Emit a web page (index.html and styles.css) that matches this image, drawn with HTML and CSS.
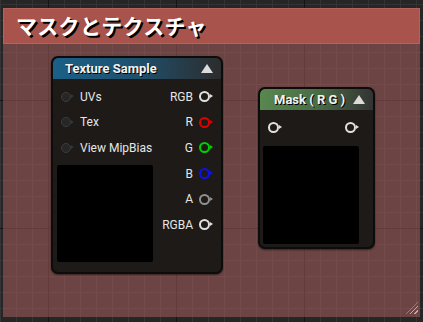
FILE: index.html
```html
<!DOCTYPE html>
<html lang="en">
<head>
    <meta charset="UTF-8">
    <title>Material Graph</title>
    <link rel="stylesheet" href="styles.css">
</head>
<body>
    <div class="graph">
        <!-- Comment box -->
        <div class="comment">
            <div class="comment-header">マスクとテクスチャ</div>
            <div class="comment-body"></div>
            <span class="grip"></span>
        </div>

        <!-- Texture Sample node -->
        <div class="node node-texture">
            <div class="node-header header-blue">
                <span class="node-title">Texture Sample</span>
                <span class="collapse"></span>
            </div>
            <div class="node-body">
                <div class="pins">
                    <div class="inputs">
                        <div class="pin in"><span class="dot"></span>UVs</div>
                        <div class="pin in"><span class="dot"></span>Tex</div>
                        <div class="pin in"><span class="dot"></span>View MipBias</div>
                        <div class="preview"></div>
                    </div>
                    <div class="outputs">
                        <div class="pin out">RGB<span class="ring white"></span></div>
                        <div class="pin out">R<span class="ring red"></span></div>
                        <div class="pin out">G<span class="ring green"></span></div>
                        <div class="pin out">B<span class="ring blue"></span></div>
                        <div class="pin out">A<span class="ring grey"></span></div>
                        <div class="pin out">RGBA<span class="ring white"></span></div>
                    </div>
                </div>
            </div>
        </div>

        <!-- Mask node -->
        <div class="node node-mask">
            <div class="node-header header-green">
                <span class="node-title">Mask ( R G )</span>
                <span class="collapse"></span>
            </div>
            <div class="node-body">
                <div class="mask-pins">
                    <span class="ring white"></span>
                    <span class="ring white"></span>
                </div>
                <div class="preview mask-preview"></div>
            </div>
        </div>
    </div>
</body>
</html>
```

FILE: styles.css
```css
body {
    margin: 0;
    width: 423px;
    height: 322px;
    overflow: hidden;
    font-family: Roboto, "Noto Sans", sans-serif;
    background-color: #262626;
    background-image:
        linear-gradient(90deg, #151515 1px, transparent 1px),
        linear-gradient(#151515 1px, transparent 1px),
        linear-gradient(90deg, #343434 1px, transparent 1px),
        linear-gradient(#343434 1px, transparent 1px);
    background-size: 128px 128px, 128px 128px, 16px 16px, 16px 16px;
    background-position: 48px 100px, 48px 100px, 0 4px, 0 4px;
}

.graph {
    position: relative;
    width: 423px;
    height: 322px;
}

/* comment */
.comment {
    position: absolute;
    left: 3px;
    top: 8px;
    width: 417px;
    height: 309px;
    display: flex;
    flex-direction: column;
}

.comment-header {
    height: 36px;
    box-sizing: border-box;
    background-color: #a8534c;
    border: 1px solid #b8605a;
    color: #fff;
    font-family: "Noto Sans CJK JP", sans-serif;
    font-weight: bold;
    font-size: 21px;
    line-height: 32px;
    padding-left: 12px;
    letter-spacing: 0.3px;
    text-shadow: 2px 2px 0 #000;
}

.comment-body {
    flex: 1;
    background-color: rgba(178, 98, 96, 0.5);
}

.grip {
    position: absolute;
    right: 2px;
    bottom: 3px;
    width: 12px;
    height: 12px;
    background-image: repeating-linear-gradient(135deg, transparent 0, transparent 2px, #c9a7a5 2px, #c9a7a5 3px);
    clip-path: polygon(100% 0, 100% 100%, 0 100%);
}

/* nodes */
.node {
    position: absolute;
    background-color: #1d1a18;
    border: 2px solid #0c0c0c;
    border-radius: 7px;
    box-shadow: 0 1px 2px rgba(0, 0, 0, 0.5);
    overflow: hidden;
}

.node-texture {
    left: 51px;
    top: 56px;
    width: 168px;
    height: 214px;
}

.node-mask {
    left: 258px;
    top: 87px;
    width: 113px;
    height: 158px;
}

.node-header {
    height: 21px;
    display: flex;
    align-items: center;
    justify-content: space-between;
    padding: 0 8px 0 12px;
    border-radius: 5px 5px 0 0;
}

.header-blue {
    background: linear-gradient(90deg, #1b6087 0%, #1f506d 50%, #2c2c2c 100%);
}

.header-green {
    background: linear-gradient(90deg, #58874f 0%, #4a6d45 50%, #333 100%);
    padding-left: 14px;
}

.node-title {
    color: #f2f2f2;
    font-weight: bold;
    font-size: 13px;
    text-shadow: 1px 1px 0 #000;
}

.collapse {
    width: 0;
    height: 0;
    border-left: 6px solid transparent;
    border-right: 6px solid transparent;
    border-bottom: 9px solid #dcdcdc;
}

.pins {
    display: flex;
    justify-content: space-between;
    padding: 5px 11px 0 4px;
}

.inputs,
.outputs {
    display: flex;
    flex-direction: column;
}

.outputs {
    align-items: flex-end;
}

.pin {
    height: 25.6px;
    display: flex;
    align-items: center;
    color: #e6e6e6;
    font-size: 12px;
}

.dot {
    width: 8px;
    height: 8px;
    border-radius: 50%;
    background-color: #262626;
    border: 1px solid #3c3c3c;
    margin: 0 9px 0 4px;
    position: relative;
}

.ring {
    width: 7px;
    height: 7px;
    border-radius: 50%;
    border: 2px solid #ddd;
    margin-left: 6px;
    position: relative;
}

.ring::after,
.dot::after {
    content: "";
    position: absolute;
    right: -5px;
    top: 1px;
    border-top: 2.5px solid transparent;
    border-bottom: 2.5px solid transparent;
    border-left: 3px solid currentColor;
}

.dot::after {
    color: #333;
    top: 1.5px;
    right: -4px;
}

.ring.white { border-color: #e0e0e0; color: #e0e0e0; }
.ring.red { border-color: #e00000; color: #e00000; }
.ring.green { border-color: #00d000; color: #00d000; }
.ring.blue { border-color: #1010e8; color: #1010e8; }
.ring.grey { border-color: #909090; color: #909090; }

.preview {
    width: 96px;
    height: 97px;
    background-color: #000;
    margin-top: 4px;
    border-radius: 2px;
}

.mask-pins {
    display: flex;
    justify-content: space-between;
    padding: 12px 17px 0 8px;
    height: 12px;
}

.mask-pins .ring {
    margin-left: 0;
}

.mask-preview {
    margin: 12px 0 0 3px;
    height: 98px;
}
```
